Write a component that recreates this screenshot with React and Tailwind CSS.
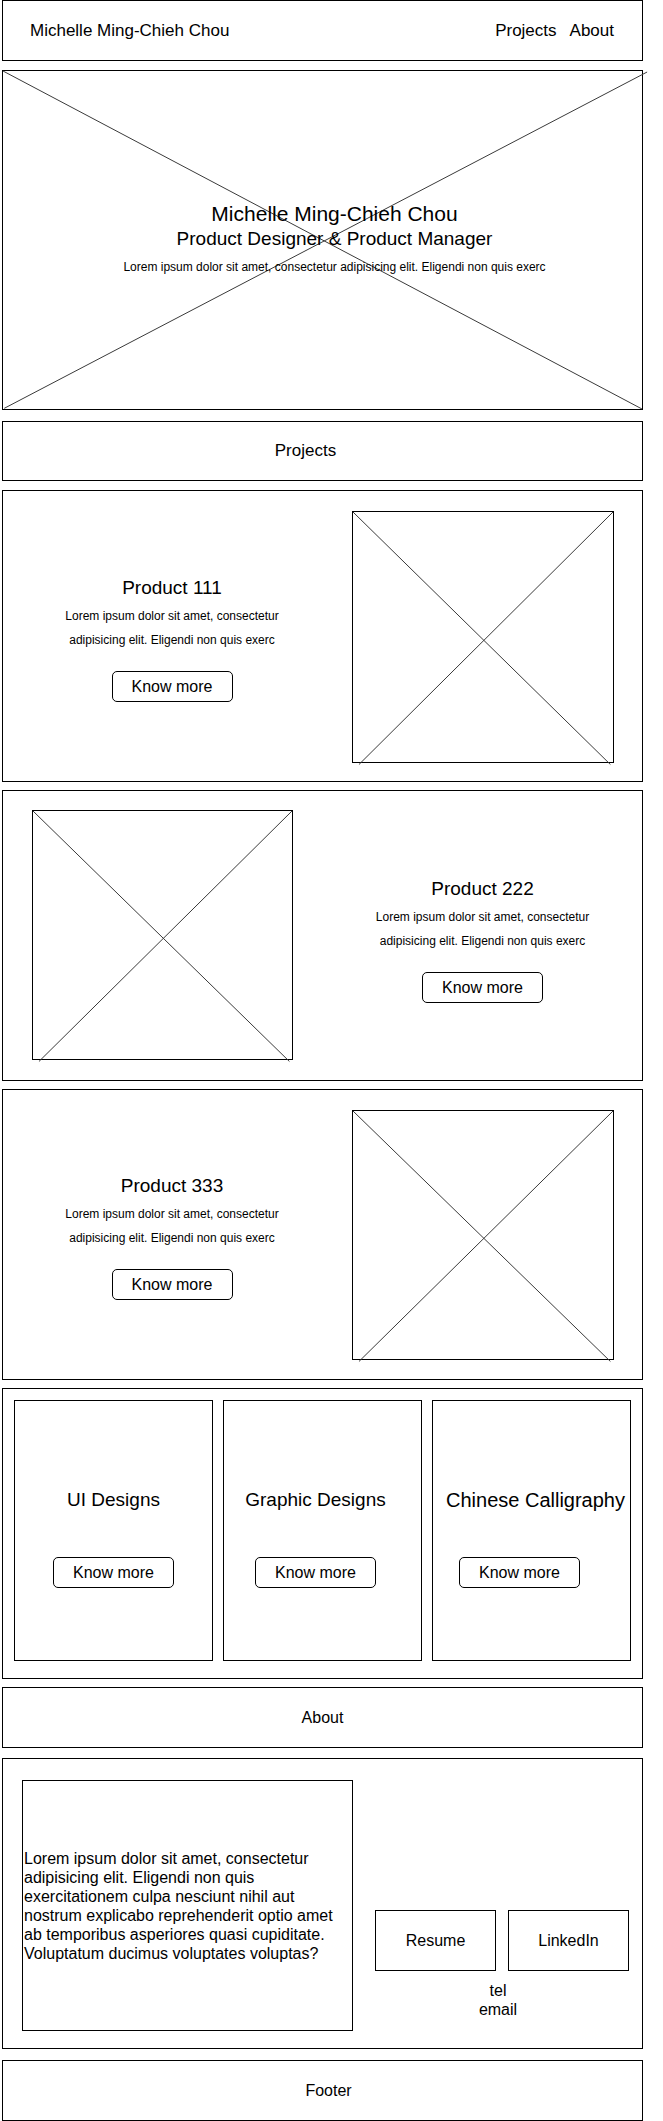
const lorem1 = 'Lorem ipsum dolor sit amet, consectetur';
const lorem2 = 'adipisicing elit. Eligendi non quis exerc';

function Cross({ rise = [2.3, 101, 100, 0], fall = [0, 0, 99, 101] }) {
  return (
    <svg
      className="absolute inset-0 w-full h-full overflow-visible pointer-events-none"
      viewBox="0 0 100 100"
      preserveAspectRatio="none"
    >
      <line x1={fall[0]} y1={fall[1]} x2={fall[2]} y2={fall[3]} stroke="#3a3a3a" strokeWidth="1" vectorEffect="non-scaling-stroke" />
      <line x1={rise[0]} y1={rise[1]} x2={rise[2]} y2={rise[3]} stroke="#3a3a3a" strokeWidth="1" vectorEffect="non-scaling-stroke" />
    </svg>
  );
}

function KnowMore({ className = '' }) {
  return (
    <button className={`w-[121px] h-[31px] border border-black rounded-[5px] text-[16px] leading-none bg-white ${className}`}>
      Know more
    </button>
  );
}

function ProductText({ title, pt }) {
  return (
    <div className={`flex flex-col items-center ${pt}`}>
      <p className="text-[19px] leading-[24px]">{title}</p>
      <p className="mt-[4px] text-[12px] leading-[24px] text-center">
        {lorem1}
        <br />
        {lorem2}
      </p>
      <KnowMore className="mt-[19px]" />
    </div>
  );
}

function ProductImage({ className }) {
  return (
    <div className={`relative border border-black shrink-0 ${className}`}>
      <Cross />
    </div>
  );
}

const categories = [
  { name: 'UI Designs', titleCls: '', btnCls: '' },
  { name: 'Graphic Designs', titleCls: 'mr-[14px]', btnCls: 'mr-[14px]' },
  { name: 'Chinese Calligraphy', titleCls: 'ml-[8px] text-[20px]', btnCls: 'mr-[24px]' },
];

export default function App() {
  return (
    <div className="w-[663px] min-h-[2121px] bg-white text-black font-['Liberation_Sans',Arial,sans-serif]">
      <div className="ml-[2px] w-[641px] flex flex-col">
        {/* header */}
        <div className="h-[61px] border border-black flex items-center justify-between pl-[27px] pr-[28px] text-[17px]">
          <span>Michelle Ming-Chieh Chou</span>
          <div className="flex gap-[13px]">
            <span>Projects</span>
            <span>About</span>
          </div>
        </div>

        {/* hero */}
        <div className="relative mt-[9px] h-[340px] border border-black">
          <Cross fall={[0, 0, 100, 100]} rise={[0.2, 99.8, 100.8, 0.3]} />
          <div className="relative flex flex-col items-center pt-[131px] pl-[24px]">
            <p className="text-[21px] leading-[24px]">Michelle Ming-Chieh Chou</p>
            <p className="mt-[1px] text-[19px] leading-[24px]">Product Designer &amp; Product Manager</p>
            <p className="mt-[9px] text-[12px] leading-[14px]">
              {lorem1} {lorem2}
            </p>
          </div>
        </div>

        {/* projects title */}
        <div className="mt-[11px] h-[60px] border border-black flex items-center justify-center pr-[34px] text-[17px]">
          Projects
        </div>

        {/* product 1 */}
        <div className="mt-[9px] h-[292px] border border-black flex items-start">
          <div className="w-[338px]">
            <ProductText title="Product 111" pt="pt-[85px]" />
          </div>
          <ProductImage className="ml-[11px] mt-[20px] w-[262px] h-[252px]" />
        </div>

        {/* product 2 */}
        <div className="mt-[8px] h-[291px] border border-black flex items-start">
          <ProductImage className="ml-[29px] mt-[19px] w-[261px] h-[250px]" />
          <div className="flex-1 pl-[30px]">
            <ProductText title="Product 222" pt="pt-[86px]" />
          </div>
        </div>

        {/* product 3 */}
        <div className="mt-[8px] h-[291px] border border-black flex items-start">
          <div className="w-[338px]">
            <ProductText title="Product 333" pt="pt-[84px]" />
          </div>
          <ProductImage className="ml-[11px] mt-[20px] w-[262px] h-[250px]" />
        </div>

        {/* categories */}
        <div className="mt-[8px] h-[291px] border border-black grid grid-cols-3 gap-[10px] px-[11px] pt-[11px] items-start">
          {categories.map((c) => (
            <div key={c.name} className="h-[261px] border border-black flex flex-col items-center pt-[87px]">
              <p className={`text-[19px] leading-[24px] whitespace-nowrap ${c.titleCls}`}>{c.name}</p>
              <KnowMore className={`mt-[45px] ${c.btnCls}`} />
            </div>
          ))}
        </div>

        {/* about title */}
        <div className="mt-[8px] h-[61px] border border-black flex items-center justify-center text-[16px]">
          About
        </div>

        {/* about content */}
        <div className="mt-[10px] h-[291px] border border-black flex items-start">
          <div className="ml-[19px] mt-[21px] w-[331px] h-[251px] border border-black flex items-center pl-[1px]">
            <p className="text-[16px] leading-[19px] whitespace-nowrap">
              Lorem ipsum dolor sit amet, consectetur
              <br />
              adipisicing elit. Eligendi non quis
              <br />
              exercitationem culpa nesciunt nihil aut
              <br />
              nostrum explicabo reprehenderit optio amet
              <br />
              ab temporibus asperiores quasi cupiditate.
              <br />
              Voluptatum ducimus voluptates voluptas?
            </p>
          </div>
          <div className="ml-[22px] mt-[151px] flex flex-col">
            <div className="flex gap-[12px] text-[16px]">
              <div className="w-[121px] h-[61px] border border-black flex items-center justify-center">Resume</div>
              <div className="w-[121px] h-[61px] border border-black flex items-center justify-center">LinkedIn</div>
            </div>
            <div className="mt-[10px] pr-[8px] text-center text-[16px] leading-[19px]">
              <p>tel</p>
              <p>email</p>
            </div>
          </div>
        </div>

        {/* footer */}
        <div className="mt-[11px] h-[61px] border border-black flex items-center justify-center pl-[12px] text-[16px]">
          Footer
        </div>
      </div>
    </div>
  );
}
